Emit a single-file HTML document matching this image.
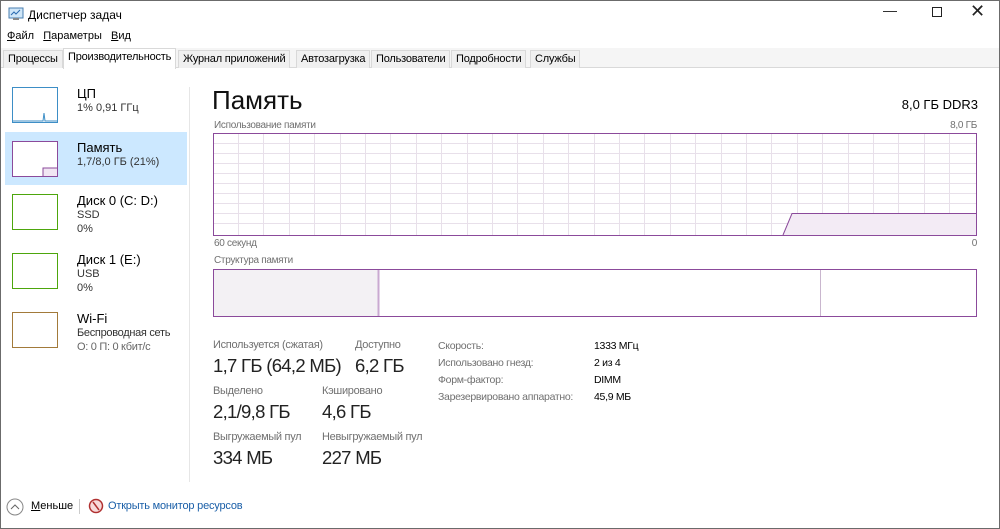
<!DOCTYPE html>
<html><head><meta charset="utf-8"><style>
*{margin:0;padding:0;box-sizing:border-box}
body{width:1000px;height:529px;overflow:hidden;background:#fff;font-family:"Liberation Sans","Noto Sans CJK SC",sans-serif;color:#000;position:relative}
.a{position:absolute;white-space:nowrap}
.win{position:absolute;left:0;top:0;width:1000px;height:529px;border:1px solid #6b6b6b}
.tabs{position:absolute;left:1px;top:48px;width:998px;height:20px;background:#f5f5f5;border-bottom:1px solid #d9d9d9}
.tab{position:absolute;top:2px;height:18px;font-size:11px;line-height:17px;padding:0 4px;border:1px solid #d9d9d9;border-bottom:none;background:#f0f0f0;letter-spacing:-0.2px}
.tab.sel{top:0;height:21px;background:#fff;border-color:#d9d9d9}
.th{position:absolute;width:46px;height:36px;background:#fff}
.n{font-size:13px}
.s{font-size:11px;color:#333}
.lbl{font-size:11px;color:#707070;letter-spacing:-0.3px}
.big{font-size:18.5px;color:#222;letter-spacing:-0.7px}
</style></head><body>
<div class="win"></div>
<svg class="a" style="left:8px;top:7px" width="16" height="14"><rect x="1" y="1" width="14" height="10" fill="#cfe6f8" stroke="#4a7fb0"/><polyline points="3,8 6,5 8,7 12,3" fill="none" stroke="#2a6ab0"/><rect x="5" y="11" width="6" height="2" fill="#888"/></svg>
<div class="a" style="left:28px;top:8px;font-size:12px">Диспетчер задач</div>
<div class="a" style="left:883px;top:2px;font-size:14px;color:#222">—</div>
<div class="a" style="left:932px;top:7px;width:10px;height:10px;border:1px solid #222"></div>
<div class="a" style="left:970px;top:1px;font-size:18px;color:#222;font-weight:300">✕</div>
<div class="a" style="left:7px;top:30px;font-size:11px"><u>Ф</u>айл&nbsp;&nbsp;&nbsp;<u>П</u>араметры&nbsp;&nbsp;&nbsp;<u>В</u>ид</div>
<div class="tabs">
<div class="tab" style="left:2px">Процессы</div>
<div class="tab sel" style="left:62px">Производительность</div>
<div class="tab" style="left:177px">Журнал приложений</div>
<div class="tab" style="left:295px">Автозагрузка</div>
<div class="tab" style="left:370px">Пользователи</div>
<div class="tab" style="left:450px">Подробности</div>
<div class="tab" style="left:529px">Службы</div>
</div>
<!-- left panel -->
<div class="a" style="left:5px;top:132px;width:182px;height:53px;background:#cce8ff"></div>
<div class="a" style="left:189px;top:87px;width:1px;height:395px;background:#e6e6e6"></div>
<div class="th" style="left:12px;top:87px;border:1px solid #3d8ec6"><svg width="44" height="34"><polyline points="0,33 30,33 31,25 32,33 44,33" fill="none" stroke="#3d8ec6"/></svg></div>
<div class="a n" style="left:77px;top:86px">ЦП</div><div class="a s" style="left:77px;top:102px">1% 0,91 ГГц</div>
<div class="th" style="left:12px;top:141px;border:1px solid #8b4a9b"><svg width="44" height="34"><rect x="30" y="26" width="14" height="8" fill="#f1e6f3"/><polyline points="30,34 30,26 44,26" fill="none" stroke="#8b4a9b"/></svg></div>
<div class="a n" style="left:77px;top:140px">Память</div><div class="a s" style="left:77px;top:156px">1,7/8,0 ГБ (21%)</div>
<div class="th" style="left:12px;top:194px;border:1px solid #4da60c"></div>
<div class="a n" style="left:77px;top:193px">Диск 0 (C: D:)</div><div class="a s" style="left:77px;top:209px">SSD</div><div class="a s" style="left:77px;top:223px">0%</div>
<div class="th" style="left:12px;top:253px;border:1px solid #4da60c"></div>
<div class="a n" style="left:77px;top:252px">Диск 1 (E:)</div><div class="a s" style="left:77px;top:268px">USB</div><div class="a s" style="left:77px;top:282px">0%</div>
<div class="th" style="left:12px;top:312px;border:1px solid #a27a3a"></div>
<div class="a n" style="left:77px;top:311px">Wi-Fi</div><div class="a s" style="left:77px;top:327px;letter-spacing:-0.3px">Беспроводная сеть</div><div class="a s" style="left:77px;top:341px;color:#666;letter-spacing:-0.3px">О: 0 П: 0 кбит/с</div>
<!-- right -->
<div class="a" style="left:212px;top:85px;font-size:26px;color:#111">Память</div>
<div class="a" style="right:22px;top:97px;font-size:13px">8,0 ГБ DDR3</div>
<div class="a lbl" style="left:214px;top:120px;font-size:10px">Использование памяти</div>
<div class="a lbl" style="right:23px;top:120px;font-size:10px">8,0 ГБ</div>
<svg class="a" style="left:213px;top:133px" width="764" height="103">
<g stroke="#e8e0ea" stroke-width="1">
<line x1="0" y1="10.5" x2="764" y2="10.5"/><line x1="0" y1="20.5" x2="764" y2="20.5"/><line x1="0" y1="30.5" x2="764" y2="30.5"/><line x1="0" y1="40.5" x2="764" y2="40.5"/><line x1="0" y1="50.5" x2="764" y2="50.5"/><line x1="0" y1="60.5" x2="764" y2="60.5"/><line x1="0" y1="70.5" x2="764" y2="70.5"/><line x1="0" y1="80.5" x2="764" y2="80.5"/><line x1="0" y1="90.5" x2="764" y2="90.5"/>
</g>
<g stroke="#e8e0ea">
<line x1="25.5" y1="0" x2="25.5" y2="103"/><line x1="50.5" y1="0" x2="50.5" y2="103"/><line x1="76.5" y1="0" x2="76.5" y2="103"/><line x1="101.5" y1="0" x2="101.5" y2="103"/><line x1="127.5" y1="0" x2="127.5" y2="103"/><line x1="152.5" y1="0" x2="152.5" y2="103"/><line x1="177.5" y1="0" x2="177.5" y2="103"/><line x1="203.5" y1="0" x2="203.5" y2="103"/><line x1="228.5" y1="0" x2="228.5" y2="103"/><line x1="254.5" y1="0" x2="254.5" y2="103"/><line x1="279.5" y1="0" x2="279.5" y2="103"/><line x1="304.5" y1="0" x2="304.5" y2="103"/><line x1="330.5" y1="0" x2="330.5" y2="103"/><line x1="355.5" y1="0" x2="355.5" y2="103"/><line x1="381.5" y1="0" x2="381.5" y2="103"/><line x1="406.5" y1="0" x2="406.5" y2="103"/><line x1="431.5" y1="0" x2="431.5" y2="103"/><line x1="457.5" y1="0" x2="457.5" y2="103"/><line x1="482.5" y1="0" x2="482.5" y2="103"/><line x1="508.5" y1="0" x2="508.5" y2="103"/><line x1="533.5" y1="0" x2="533.5" y2="103"/><line x1="558.5" y1="0" x2="558.5" y2="103"/><line x1="584.5" y1="0" x2="584.5" y2="103"/><line x1="609.5" y1="0" x2="609.5" y2="103"/><line x1="635.5" y1="0" x2="635.5" y2="103"/><line x1="660.5" y1="0" x2="660.5" y2="103"/><line x1="685.5" y1="0" x2="685.5" y2="103"/><line x1="711.5" y1="0" x2="711.5" y2="103"/><line x1="736.5" y1="0" x2="736.5" y2="103"/>
</g>
<polygon points="570,102 579,80.5 764,80.5 764,102" fill="#f3ebf5"/>
<polyline points="570,102 579,80.5 764,80.5" fill="none" stroke="#8b4a9b"/>
<rect x="0.5" y="0.5" width="763" height="102" fill="none" stroke="#8b4a9b"/>
</svg>
<div class="a lbl" style="left:214px;top:238px;font-size:10px">60 секунд</div>
<div class="a lbl" style="right:23px;top:238px;font-size:10px">0</div>
<div class="a lbl" style="left:214px;top:255px;font-size:10px">Структура памяти</div>
<svg class="a" style="left:213px;top:269px" width="764" height="48">
<rect x="0" y="0" width="165" height="48" fill="#f3f1f4"/>
<line x1="165.5" y1="0" x2="165.5" y2="48" stroke="#c9a9d1" stroke-width="2"/>
<line x1="607.5" y1="0" x2="607.5" y2="48" stroke="#c9b6ce"/>
<rect x="0.5" y="0.5" width="763" height="47" fill="none" stroke="#8b4a9b"/>
</svg>
<div class="a lbl" style="left:213px;top:339px">Используется (сжатая)</div>
<div class="a lbl" style="left:355px;top:339px">Доступно</div>
<div class="a big" style="left:213px;top:355px">1,7 ГБ (64,2 МБ)</div>
<div class="a big" style="left:355px;top:355px">6,2 ГБ</div>
<div class="a lbl" style="left:213px;top:385px">Выделено</div>
<div class="a lbl" style="left:322px;top:385px">Кэшировано</div>
<div class="a big" style="left:213px;top:401px">2,1/9,8 ГБ</div>
<div class="a big" style="left:322px;top:401px">4,6 ГБ</div>
<div class="a lbl" style="left:213px;top:431px">Выгружаемый пул</div>
<div class="a lbl" style="left:322px;top:431px">Невыгружаемый пул</div>
<div class="a big" style="left:213px;top:447px">334 МБ</div>
<div class="a big" style="left:322px;top:447px">227 МБ</div>
<div class="a lbl" style="left:438px;top:338px;line-height:17px;font-size:10.5px">Скорость:<br>Использовано гнезд:<br>Форм-фактор:<br>Зарезервировано аппаратно:</div>
<div class="a" style="left:594px;top:338px;line-height:17px;font-size:10.5px;letter-spacing:-0.3px">1333 МГц<br>2 из 4<br>DIMM<br>45,9 МБ</div>
<!-- bottom -->
<svg class="a" style="left:6px;top:498px" width="18" height="18"><circle cx="9" cy="9" r="8" fill="none" stroke="#888"/><polyline points="5,11 9,7 13,11" fill="none" stroke="#666"/></svg>
<div class="a" style="left:31px;top:500px;font-size:11px"><u>М</u>еньше</div>
<div class="a" style="left:79px;top:499px;width:1px;height:15px;background:#ccc"></div>
<svg class="a" style="left:88px;top:498px" width="16" height="16"><circle cx="8" cy="8" r="6.5" fill="#f7dada" stroke="#b03030" stroke-width="1.5"/><line x1="5" y1="4" x2="11" y2="12" stroke="#b03030" stroke-width="1.5"/></svg>
<div class="a" style="left:108px;top:500px;font-size:11px;color:#1a5fa8;letter-spacing:-0.2px">Открыть монитор ресурсов</div>
</body></html>
